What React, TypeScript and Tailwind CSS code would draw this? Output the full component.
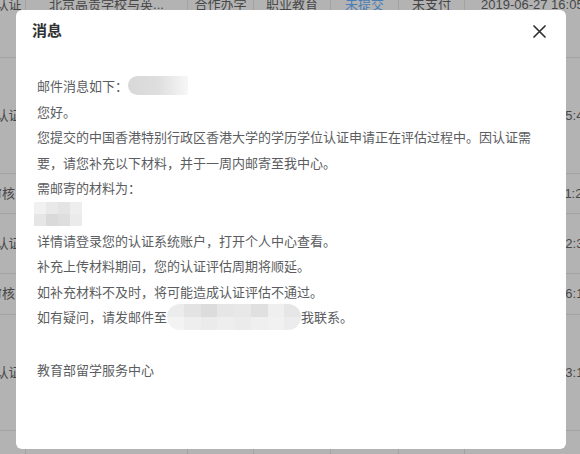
const rows = [
  { h: 'h-[105px]', pad: 'pl-[16px]', tag: '学历认证', school: '北京高贵学校与英...', kind: '合作办学', level: '职业教育', state: '未提交', pay: '未支付', time: '2019-06-27 16:05:12' },
  { h: 'h-[116px]', pad: 'pl-[23px]', tag: '学历认证', school: '北京高贵学校与英...', kind: '合作办学', level: '职业教育', state: '未提交', pay: '未支付', time: '2019-06-27 15:43:08' },
  { h: 'h-[40px]', pad: 'pl-[23px]', tag: '待审核', school: '北京高贵学校与英...', kind: '合作办学', level: '职业教育', state: '未提交', pay: '未支付', time: '2019-06-27 11:27:45' },
  { h: 'h-[60px]', pad: 'pl-[23px]', tag: '学历认证', school: '北京高贵学校与英...', kind: '合作办学', level: '职业教育', state: '未提交', pay: '未支付', time: '2019-06-27 12:36:19' },
  { h: 'h-[41px]', pad: 'pl-[23px]', tag: '待审核', school: '北京高贵学校与英...', kind: '合作办学', level: '职业教育', state: '未提交', pay: '未支付', time: '2019-06-27 16:14:02' },
  { h: 'h-[116px]', pad: 'pl-[23px]', tag: '学历认证', school: '北京高贵学校与英...', kind: '合作办学', level: '职业教育', state: '未提交', pay: '未支付', time: '2019-06-27 13:12:50' },
  { h: 'h-[60px]', pad: 'pl-[23px]', tag: '学历认证', school: '北京高贵学校与英...', kind: '合作办学', level: '职业教育', state: '未提交', pay: '未支付', time: '2019-06-27 10:08:33' },
];

const font = { fontFamily: '"Liberation Sans", "Noto Sans CJK SC", sans-serif' };

function Table() {
  return (
    <div className="-mt-[47px] -ml-[34px] flex flex-col text-[13px] text-[#474747]" style={font}>
      {rows.map((r, i) => (
        <div key={i} className={`flex ${r.h} border-b border-[#a3a3a3]`}>
          <div className="w-[60px] shrink-0 flex items-center justify-center border-r border-[#a3a3a3] whitespace-nowrap">
            {r.tag}
          </div>
          <div className="w-[162px] shrink-0 flex items-center justify-center border-r border-[#a3a3a3] whitespace-nowrap">
            {r.school}
          </div>
          <div className="w-[66px] shrink-0 flex items-center justify-center border-r border-[#a3a3a3] whitespace-nowrap">
            {r.kind}
          </div>
          <div className="w-[77px] shrink-0 flex items-center justify-center border-r border-[#a3a3a3] whitespace-nowrap">
            {r.level}
          </div>
          <div className="w-[68px] shrink-0 flex items-center justify-center border-r border-[#a3a3a3] whitespace-nowrap text-[#4a7db5]">
            {r.state}
          </div>
          <div className="w-[66px] shrink-0 flex items-center justify-center border-r border-[#a3a3a3] whitespace-nowrap">
            {r.pay}
          </div>
          <div className={`flex-1 flex items-center ${r.pad} whitespace-nowrap overflow-hidden`}>
            {r.time}
          </div>
        </div>
      ))}
    </div>
  );
}

function Blur({ className }: { className: string }) {
  return <span className={`inline-block align-middle ${className}`} />;
}

export default function App() {
  return (
    <div className="relative w-[580px] h-[454px] overflow-hidden bg-[#b3b3b3]">
      <Table />

      {/* Message box */}
      <div
        className="absolute left-[16px] top-[10px] w-[550px] h-[439px] rounded-[6px] bg-white"
        style={{ fontFamily: '"Noto Sans CJK SC", "Liberation Sans", sans-serif' }}
      >
        <div className="flex items-center justify-between pl-[16px] pr-[20px] pt-[9px]">
          <span className="text-[15px] font-bold leading-[22px] text-[#303133]">消息</span>
          <svg width="13" height="13" viewBox="0 0 13 13" className="mt-[3px]">
            <path d="M1 1L12 12M12 1L1 12" stroke="#303133" strokeWidth="1.7" strokeLinecap="round" />
          </svg>
        </div>

        <div className="pl-[21px] pr-[30px] pt-[32px] text-[13px] leading-[25.5px] text-[#5b5d61]">
          <p className="flex items-center">
            邮件消息如下：
            <Blur className="w-[60px] h-[19px] rounded-l-full bg-gradient-to-r from-[#d8d8d8] via-[#dedede] to-[#f7f7f7]" />
          </p>
          <p>您好。</p>
          <p>
            您提交的中国香港特别行政区香港大学的学历学位认证申请正在评估过程中。因认证需要，请您补充以下材料，并于一周内邮寄至我中心。
          </p>
          <p>需邮寄的材料为：</p>
          <p className="flex items-center h-[27px] -ml-[3px]">
            <span className="grid grid-cols-4 grid-rows-2 w-[48px] h-[24px]">
              <span className="bg-[#f1f1f1]" />
              <span className="bg-[#e9e9e9]" />
              <span className="bg-[#e4e4e4]" />
              <span className="bg-[#eeeeee]" />
              <span className="bg-[#e6e6e6]" />
              <span className="bg-[#dadada]" />
              <span className="bg-[#dedede]" />
              <span className="bg-[#ebebeb]" />
            </span>
          </p>
          <p>详情请登录您的认证系统账户，打开个人中心查看。</p>
          <p>补充上传材料期间，您的认证评估周期将顺延。</p>
          <p>如补充材料不及时，将可能造成认证评估不通过。</p>
          <p className="flex items-center">
            如有疑问，请发邮件至
            <span className="inline-grid grid-cols-8 grid-rows-2 w-[134px] h-[26px] rounded-full overflow-hidden">
              <span className="bg-[#ececec]" />
              <span className="bg-[#e3e3e3]" />
              <span className="bg-[#dcdcdc]" />
              <span className="bg-[#e6e6e6]" />
              <span className="bg-[#e8e8e8]" />
              <span className="bg-[#e0e0e0]" />
              <span className="bg-[#efefef]" />
              <span className="bg-[#e6e6e6]" />
              <span className="bg-[#f3f3f3]" />
              <span className="bg-[#eeeeee]" />
              <span className="bg-[#ebebeb]" />
              <span className="bg-[#eeeeee]" />
              <span className="bg-[#ebebeb]" />
              <span className="bg-[#efefef]" />
              <span className="bg-[#f1f1f1]" />
              <span className="bg-[#ececec]" />
            </span>
            我联系。
          </p>
          <p className="h-[27px]" />
          <p>教育部留学服务中心</p>
        </div>
      </div>
    </div>
  );
}
